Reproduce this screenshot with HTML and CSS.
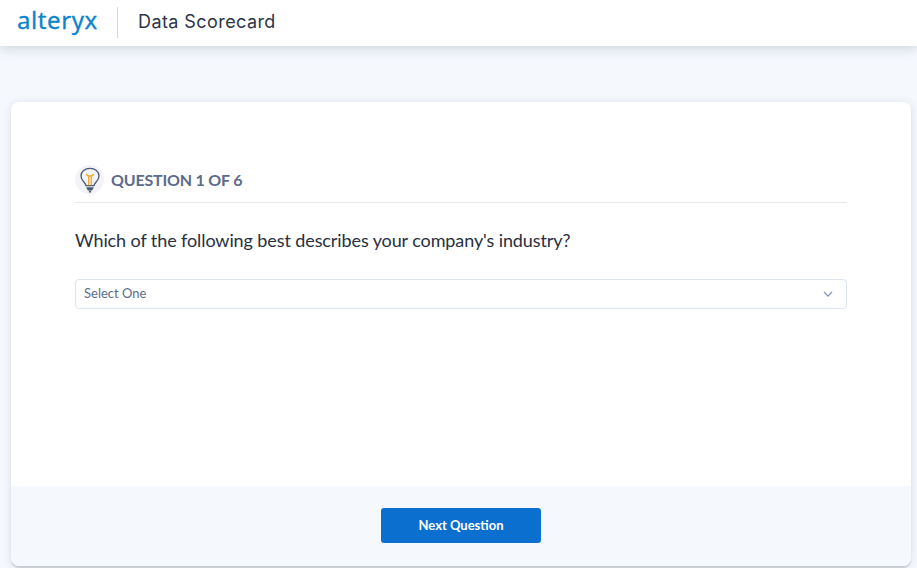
FILE: index.html
```html
<!DOCTYPE html>
<html lang="en">
<head>
<meta charset="utf-8">
<title>Data Scorecard</title>
<link rel="stylesheet" href="styles.css">
</head>
<body>
<header class="topbar">
  <span class="logo">alteryx</span>
  <span class="divider"></span>
  <span class="app-name">Data Scorecard</span>
</header>
<main class="page">
  <section class="card">
    <div class="card-body">
      <div class="q-head">
        <span class="q-icon">
          <svg width="22" height="26" viewBox="0 0 20 24" fill="none">
            <path d="M6.300 17.200c0-2.600-4.600-4.300-4.600-9 0-4 3.600-6.900 8.300-6.900s8.300 2.900 8.300 6.900c0 4.700-4.600 6.400-4.600 9z" stroke="#4a5a70" stroke-width="1.200"/>
            <path d="M6.800 6.300c0 1.500 1.300 2 2.700 2h1c1.400 0 2.700-.5 2.700-2M8.800 8.300v8.500M11.200 8.300v8.500" stroke="#f5a623" stroke-width="1.200"/>
            <path d="M6.500 18.800h7l-1.500 3h-4z" fill="#4a5a70"/>
            <path d="M9 22h2v1.500H9z" fill="#4a5a70"/>
          </svg>
        </span>
        <span class="q-count">QUESTION 1 OF 6</span>
      </div>
      <h1 class="q-text">Which of the following best describes your company's industry?</h1>
      <div class="select">
        <span class="select-label">Select One</span>
        <svg class="chevron" width="10" height="6" viewBox="0 0 10 6" fill="none">
          <path d="M1 1l4 4 4-4" stroke="#8a97b8" stroke-width="1.300"/>
        </svg>
      </div>
    </div>
    <footer class="card-foot">
      <button class="next" type="button">Next Question</button>
    </footer>
  </section>
</main>
</body>
</html>
```
FILE: styles.css
```css
* { box-sizing: border-box; }
html, body { margin: 0; height: 100%; }
body {
  background: #f5f8fd;
  font-family: "Lato", "Liberation Sans", sans-serif;
  overflow: hidden;
}
.topbar {
  height: 46px;
  background: #fff;
  display: flex;
  align-items: center;
  padding-left: 17px;
  box-shadow: 0 2px 12px rgba(60, 75, 100, 0.22);
  position: relative;
}
.logo {
  font-family: "Noto Sans", sans-serif;
  font-size: 24px;
  line-height: 30px;
  color: #0b84cc;
  letter-spacing: 0.6px;
  -webkit-text-stroke: 0.3px #0b84cc;
  width: 81px;
  position: relative;
  top: -3px;
}
.divider {
  width: 1px;
  height: 31px;
  background: #d3d9e3;
  margin: 0 20px 0 19px;
  position: relative;
  top: -1px;
}
.app-name {
  font-family: "Inter", sans-serif;
  font-size: 18px;
  color: #2c3548;
  letter-spacing: 0.42px;
  position: relative;
  top: -2px;
}
.page { padding: 56px 6px 0 11px; }
.card {
  height: 464px;
  background: #fff;
  border-radius: 8px;
  box-shadow: 0 1px 8px rgba(60, 75, 100, 0.14), 0 2px 1px rgba(60, 60, 60, 0.18);
  display: flex;
  flex-direction: column;
  overflow: hidden;
}
.card-body { flex: 1; padding: 63px 64px 0; }
.q-head {
  height: 38px;
  display: flex;
  align-items: flex-start;
  gap: 7px;
  border-bottom: 1px solid #e3e7ef;
}
.q-icon {
  width: 29px;
  height: 29px;
  border-radius: 50%;
  background: #f1f3f6;
  display: flex;
  align-items: center;
  justify-content: center;
}
.q-count {
  font-size: 16px;
  font-weight: 700;
  line-height: 30px;
  color: #5c6b8a;
  letter-spacing: -0.2px;
}
.q-text {
  margin: 25px 0 0;
  font-size: 18px;
  font-weight: 400;
  line-height: 24px;
  color: #27303f;
  letter-spacing: -0.1px;
}
.select {
  margin-top: 27px;
  height: 30px;
  border: 1px solid #dde3ef;
  border-radius: 4px;
  padding: 0 13px 0 8px;
  display: flex;
  align-items: center;
  justify-content: space-between;
  font-size: 13px;
  color: #5c6b8a;
}
.select-label { padding-bottom: 2px; }
.card-foot {
  height: 80px;
  background: #f5f8fd;
  padding-top: 22px;
  display: flex;
  justify-content: center;
  align-items: flex-start;
}
.next {
  width: 160px;
  height: 35px;
  border: 0;
  border-radius: 3px;
  background: #0b6fd0;
  color: #fff;
  font-family: inherit;
  font-size: 13px;
  font-weight: 700;
  padding: 0 0 2px;
}
```
